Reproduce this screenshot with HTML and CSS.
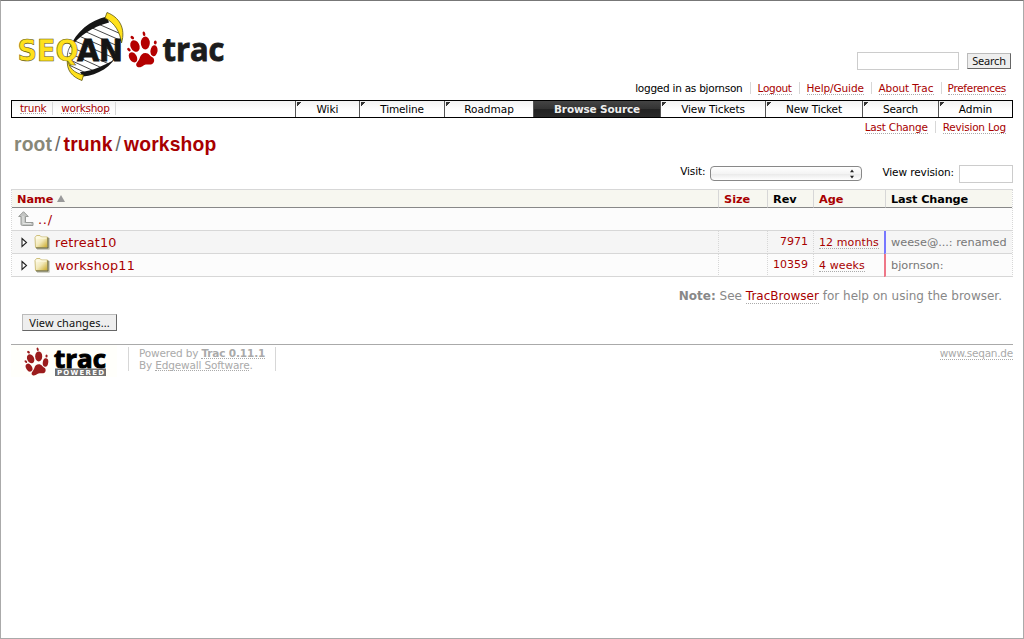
FILE: index.html
```html
<!DOCTYPE html>
<html lang="en">
<head>
<meta charset="utf-8">
<title>root/trunk/workshop – SeqAn – Trac</title>
<link rel="stylesheet" href="styles.css">
</head>
<body>
<svg class="symbols" width="0" height="0">
  <symbol id="paw" viewBox="0 0 31 37">
    <g fill="currentColor">
      <path d="M18.300 22C22.500 22 22.500 25 25 26C28.500 27.500 27.500 33 24 33.500C20.500 34 19 32.500 16.500 34.500C14 37 9.500 37 9.200 34C9 31.500 12 30 12.700 27C13.500 24 15.500 22 18.300 22Z"/>
      <ellipse cx="18.300" cy="12" rx="4.500" ry="6.400"/>
      <ellipse cx="8" cy="15" rx="4.400" ry="6" transform="rotate(-26 8 15)"/>
      <ellipse cx="27" cy="19.700" rx="3.500" ry="5.500" transform="rotate(8 27 19.700)"/>
      <ellipse cx="6" cy="26.300" rx="3.700" ry="5.500" transform="rotate(-32 6 26.300)"/>
      <ellipse cx="17" cy="2.800" rx="1.300" ry="2.300" transform="rotate(-15 17 2.800)"/>
      <ellipse cx="5.300" cy="6.600" rx="1.400" ry="2" transform="rotate(-50 5.300 6.600)"/>
      <ellipse cx="28.300" cy="11.500" rx="1.400" ry="2"/>
      <ellipse cx="1.900" cy="18.600" rx="1.300" ry="2" transform="rotate(-45 1.900 18.600)"/>
    </g>
  </symbol>
  <symbol id="folder" viewBox="0 0 16 16">
    <path d="M3 14.500h11.500V4H15.500V15.500H3z" fill="#a5a590"/>
    <path d="M1 3.500L2.500 1.500H6L7.500 3H13.500V13.500H1.500z" fill="url(#gold)" stroke="#cfc07c"/>
    <path d="M2 4H12.500" fill="none" stroke="#fffde8"/>
    <path d="M14 3.500V14H2" fill="none" stroke="#5b5a33" stroke-width="1"/>
    <linearGradient id="gold" x2="1" y2="1"><stop stop-color="#fffef3"/><stop offset=".5" stop-color="#f2e9ba"/><stop offset="1" stop-color="#c9a824"/></linearGradient>
  </symbol>
  <symbol id="expander" viewBox="0 0 7 11"><path d="M1 1.500L5.500 5.500L1 9.500z" fill="#fff" stroke="#222" stroke-width="1.100"/></symbol>
</svg>
<div class="page">
  <header class="banner">
    <svg class="logo" width="218" height="80" viewBox="10 5 218 80">
      <path d="M107 18C90 24 76 34 70 50C67 58 68 66 80 76C98 73 112 64 118 50C123 38 120 26 107 18Z" fill="#fff"/>
      <path d="M96 23L121 34M90 27L122 41M84 31L120 47M79 36L118 53M75 41L114 58M71 47L109 64M69 53L102 68M68 59L94 71M69 65L86 73" stroke="#333" stroke-width=".9"/>
      <path d="M107 16.500C90 20 76 32 69.500 48C80 36 91 27 109 22.500Z" fill="#151515"/>
      <path d="M80 72C89 71.500 99 68 112 61L118 53C112 67 98 75 83 76.500Z" fill="#151515"/>
      <path d="M107 12.500C119 17 126 28 121.500 43C120 32 115 23 105 18Z" fill="#ffe11c" stroke="#5d5510" stroke-width=".8"/>
      <path d="M67.500 59C69 68 74 73 83.500 75L82 80.500C72 77 66 70 67.500 59Z" fill="#ffe11c" stroke="#5d5510" stroke-width=".8"/>
      <path d="M73 42C69 47 66.500 53 67.500 60" fill="none" stroke="#444" stroke-width=".8"/>
      <text class="seq" x="17.500" y="61" textLength="61" lengthAdjust="spacingAndGlyphs">SEQ</text>
      <text class="an" x="77" y="61" textLength="46" lengthAdjust="spacingAndGlyphs">AN</text>
      <use href="#paw" x="127" y="31" width="31" height="37" color="#b40000"/>
      <text class="tracword" x="162.500" y="61" textLength="62" lengthAdjust="spacingAndGlyphs">trac</text>
    </svg>
    <form class="search"><input class="query" type="text" aria-label="Search"><button class="button find" type="button">Search</button></form>
    <nav class="metanav"><span class="user">logged in as bjornson</span><span class="m-logout"><a href="#">Logout</a></span><span class="m-help"><a href="#">Help/Guide</a></span><span class="m-about"><a href="#">About Trac</a></span><span class="m-prefs"><a href="#">Preferences</a></span></nav>
  </header>
  <nav class="mainnav">
    <div class="places"><span><a href="#">trunk</a></span><span><a href="#">workshop</a></span></div>
    <div class="tab wiki">Wiki</div><div class="tab timeline">Timeline</div><div class="tab roadmap">Roadmap</div><div class="tab active">Browse Source</div><div class="tab tickets">View Tickets</div><div class="tab new">New Ticket</div><div class="tab find-tab">Search</div><div class="tab admin">Admin</div>
  </nav>
  <div class="heading">
    <h1><a class="root">root</a><i>/</i><a class="trunk">trunk</a><i>/</i><a class="leaf">workshop</a></h1>
    <nav class="ctxtnav"><span><a href="#">Last Change</a></span><span><a href="#">Revision Log</a></span></nav>
  </div>
  <div class="jump">
    <span class="visit">Visit:</span>
    <div class="select"><svg width="6" height="10" viewBox="0 0 6 10"><path d="M3 .5L5 3.200H1zM3 9.500L1 6.800H5z" fill="#222"/></svg></div>
    <span class="viewrev">View revision:</span><input class="rev-input" type="text" aria-label="View revision">
  </div>
  <table class="dirlist">
    <colgroup><col class="c-name"><col class="c-size"><col class="c-rev"><col class="c-age"><col class="c-change"></colgroup>
    <thead><tr><th><div class="line">Name<svg class="sort" width="8" height="7" viewBox="0 0 8 7"><path d="M4 0L8 7H0z" fill="#999"/></svg></div></th><th>Size</th><th class="plain">Rev</th><th>Age</th><th class="plain last">Last Change</th></tr></thead>
    <tbody>
      <tr><td colspan="5"><div class="line parent"><svg width="16" height="16" viewBox="0 0 16 16"><path d="M5.500 .7L10.300 5.500H7.500V11.500H15V14.500H4.500C3.500 14.500 3 14 3 13V5.500H.7z" fill="#c4c6c4" stroke="#989b98"/><path d="M5 5V12.500H13" fill="none" stroke="#e3e5e3"/></svg><span>../</span></div></td></tr>
      <tr class="odd"><td><div class="line"><svg class="exp" width="7" height="11"><use href="#expander"/></svg><svg class="folder" width="16" height="16"><use href="#folder"/></svg><span class="entry">retreat10</span></div></td><td></td><td class="rev">7971</td><td class="age"><a href="#">12 months</a></td><td class="change blue">weese@...: renamed</td></tr>
      <tr><td><div class="line"><svg class="exp" width="7" height="11"><use href="#expander"/></svg><svg class="folder" width="16" height="16"><use href="#folder"/></svg><span class="entry">workshop11</span></div></td><td></td><td class="rev">10359</td><td class="age"><a href="#">4 weeks</a></td><td class="change pink">bjornson:</td></tr>
    </tbody>
  </table>
  <p class="note"><b>Note:</b> See <a href="#">TracBrowser</a> for help on using the browser.</p>
  <button class="button changes" type="button">View changes...</button>
  <footer>
    <svg class="powered-logo" width="106" height="32" viewBox="0 0 106 32">
      <rect width="106" height="32" fill="#fffffb"/>
      <use href="#paw" x="13" y="2" width="25" height="29" color="#9b1c1c"/>
      <text class="trac-small" x="43" y="22.500" textLength="52" lengthAdjust="spacingAndGlyphs">trac</text>
      <rect x="44" y="23.500" width="51" height="7.500" fill="#707070"/>
      <text class="powered" x="46" y="30" textLength="47">POWERED</text>
    </svg>
    <div class="credit"><div>Powered by <a class="bold" href="#">Trac 0.11.1</a></div><div class="by">By <a href="#">Edgewall Software</a>.</div></div>
    <a class="site" href="#">www.seqan.de</a>
  </footer>
</div>
</body>
</html>
```
FILE: styles.css
```css
* { box-sizing: border-box; }
body { margin: 0; background: #fff; color: #000; font: 10.5px/13px "DejaVu Sans", Verdana, sans-serif; white-space: nowrap; }
.page { height: 639px; padding: 0 10px; border: 1px solid #aaa; border-top-color: #777; overflow: hidden; }
.symbols { display: block; }
a { color: #a80000; text-decoration: none; border-bottom: 1px dotted #aaa; }
.banner { display: grid; grid-template-columns: 225px 1fr; grid-template-rows: 81px 18px; }
.logo { margin: 4px 0 0 -1px; }
.seq, .an { font: bold 29.5px "DejaVu Sans", sans-serif; }
.seq { fill: #ffe11c; stroke: #5d5510; stroke-width: .6; }
.an { fill: #151515; stroke: #151515; stroke-width: .8; }
.tracword { font: bold 32.5px "Open Sans", sans-serif; fill: #1c1c1c; stroke: #1c1c1c; stroke-width: .9; }
.search { display: flex; justify-content: flex-end; padding: 51px 2px 0 0; }
.query { width: 102px; height: 18px; padding: 0; border: 1px solid #ccc; margin-right: 8px; }
.button { padding: 0; background: #eee; border: 1px solid #bbb; border-right-color: #666; border-bottom-color: #666; color: #111; font: 11px "Noto Sans", sans-serif; }
.find { width: 44px; height: 16px; line-height: 12px; margin-top: 1px; letter-spacing: -.2px; }
.metanav { grid-column: 1 / 3; display: flex; justify-content: flex-end; line-height: 12px; letter-spacing: -.3px; }
.metanav span { padding: 0 7px; border-left: 1px solid #d7d7d7; height: 12px; }
.metanav .user { border: 0; letter-spacing: -.25px; }
.metanav .m-logout { width: 49px; }
.metanav .m-help { width: 72px; letter-spacing: -.1px; }
.metanav .m-about { width: 70px; letter-spacing: -.1px; }
.metanav .m-prefs { padding-left: 6px; }
.metanav a, .ctxtnav a { display: block; height: 13px; }
.mainnav { display: flex; height: 18px; border: 1px solid #000; background: linear-gradient(#f2f2f2, #fff 60%); line-height: 16px; }
.places { width: 283px; display: flex; padding-top: 1px; line-height: 13px; letter-spacing: -.3px; }
.places span { border-right: 1px solid #d7d7d7; height: 13px; padding: 0 6px 0 8px; }
.places span + span { padding: 0 5px 0 8px; }
.places a { display: block; height: 12px; line-height: 12px; }
.tab { text-align: center; border-left: 1px solid #555; background: linear-gradient(135deg, #333 3px, transparent 3px) 1px 1px / 5px 5px no-repeat; }
.wiki { width: 64px; }
.timeline { width: 85px; letter-spacing: -.15px; }
.roadmap { width: 89px; }
.active { width: 127px; color: #eee; background: linear-gradient(#444, #333 50%, #222 51%, #292929); font-weight: bold; letter-spacing: -.15px; }
.tickets { width: 105px; letter-spacing: -.1px; }
.new { width: 97px; letter-spacing: -.15px; }
.find-tab { width: 76px; letter-spacing: -.15px; }
.admin { flex: 1; }
.heading { display: flex; justify-content: space-between; height: 46px; }
h1 { margin: 14px 0 0 3px; font: bold 19.3px/26px "Liberation Sans", Arial, sans-serif; letter-spacing: .15px; }
h1 a { border: 0; }
h1 i { font-style: normal; font-weight: normal; color: #666; margin: 0 3px; }
h1 .root { color: #887; }
.ctxtnav { display: flex; margin: 3px 0 0; line-height: 13px; }
.ctxtnav span { height: 12px; padding: 0 7px; letter-spacing: -.22px; }
.ctxtnav span + span { border-left: 1px solid #d7d7d7; }
.jump { display: flex; justify-content: flex-end; height: 25px; line-height: 15px; letter-spacing: -.1px; }
.visit { margin: 0 5px 0 0; }
.viewrev { line-height: 17px; }
.select { width: 152px; height: 15px; margin: 2px 20px 0 0; border: 1px solid #888; border-radius: 4px; background: linear-gradient(#fff, #f4f4f4 50%, #e8e8e8 51%, #fff); display: flex; justify-content: flex-end; align-items: center; padding-right: 6px; }
.rev-input { width: 54px; height: 18px; border: 1px solid #ccc; padding: 0; margin: 1px 0 0 5px; }
.dirlist { width: 1002px; table-layout: fixed; border-collapse: separate; border-spacing: 0; border: 1px dotted #d7d7d7; border-top: 1px solid #d7d7d7; border-bottom: 0; }
.c-name { width: 706px; } .c-size { width: 49px; } .c-rev { width: 46px; } .c-age { width: 72px; } .c-change { width: 127px; }
th { height: 18px; padding: 2px 5px 0; background: #f7f7f0; color: #a80000; text-align: left; border-bottom: 1px solid #888; font-size: 11.3px; line-height: 15px; }
th + th { border-left: 1px solid #d7d7d7; }
th.plain { color: #000; }
th.last { letter-spacing: -.15px; }
td { height: 23px; padding: 0 5px; background: #fcfcfc; border-bottom: 1px solid #d7d7d7; font-size: 11px; line-height: 20px; }
td + td { border-left: 1px dotted #d7d7d7; }
.odd td { background: #f5f5f5; }
.line { display: flex; align-items: center; }
.sort { margin: -2px 0 0 3px; }
.parent { color: #a80000; font-size: 13px; }
.parent svg { margin-left: 1px; }
.parent span { margin: 2px 0 0 4px; line-height: 18px; letter-spacing: .7px; }
.exp { margin: 0 6px 0 4px; }
.folder { margin: 0 5px 0 0; }
.entry { color: #a80000; font-size: 12.8px; letter-spacing: .2px; padding-top: 1px; }
.rev { color: #a80000; text-align: right; padding-bottom: 1px; }
.age { padding-bottom: 0; }
.age a { display: block; width: fit-content; height: 13px; line-height: 13px; letter-spacing: .1px; }
td.change { color: #777; font-size: 11.3px; line-height: 21px; padding: 1px 0 0 5px; }
td.blue { box-shadow: -1px 0 #77f; border-left: 1px solid #77f; letter-spacing: -.02px; }
td.pink { box-shadow: -1px 0 #e78; border-left: 1px solid #e78; }
.note { margin: 12px 11px 10px; text-align: right; color: #888; font-size: 12px; line-height: 15px; }
.note a { display: inline-block; height: 15px; }
.changes { display: block; margin-left: 11px; width: 95px; height: 17px; line-height: 15px; letter-spacing: .1px; }
footer { margin-top: 13px; border-top: 1px solid #aaa; height: 35px; display: flex; color: #aaa; line-height: 12px; }
footer a { color: #aaa; }
.trac-small { font: bold 25px "Open Sans", sans-serif; fill: #000; stroke: #000; }
.powered { font: bold 7px "DejaVu Sans", sans-serif; fill: #fff; }
.credit { margin: 2px 0 0 11px; height: 24px; width: 148px; padding-left: 10px; border: 1px solid #d7d7d7; border-width: 0 1px; letter-spacing: -.16px; }
.bold { font-weight: bold; letter-spacing: -.15px; }
.credit a { display: inline-block; height: 12px; }
.credit .by { letter-spacing: -.16px; }
.site { height: 15px; line-height: 16px; margin-left: auto; letter-spacing: -.25px; }
```
